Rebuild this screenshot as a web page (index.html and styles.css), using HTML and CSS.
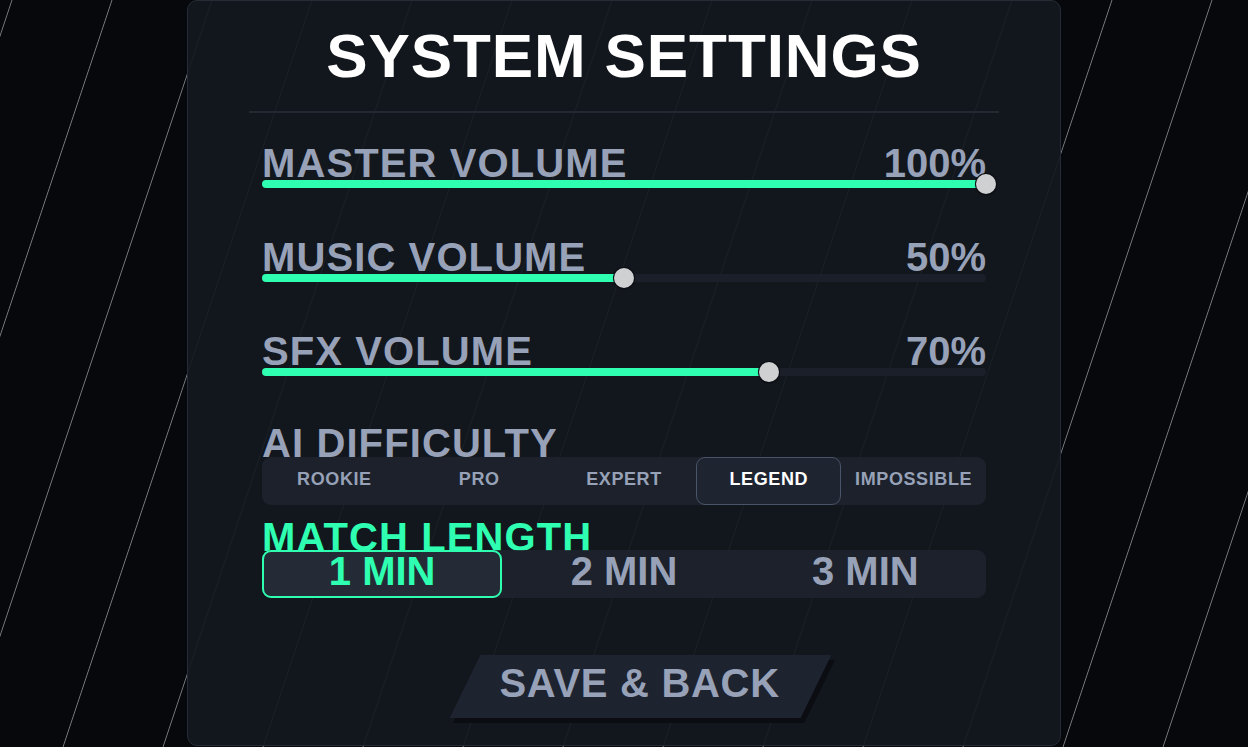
FILE: index.html
```html
<!DOCTYPE html>
<html lang="en">
<head>
<meta charset="utf-8">
<title>System Settings</title>
<link rel="stylesheet" href="styles.css">
</head>
<body>
<div class="screen">
  <div class="panel">
    <header class="panel-head">
      <h1 class="title">SYSTEM SETTINGS</h1>
    </header>
    <div class="panel-body">
      <div class="slider-row">
        <div class="row-head"><span class="label">MASTER VOLUME</span><span class="label value">100%</span></div>
        <div class="track"><div class="fill" style="width:100%"><span class="thumb"></span></div></div>
      </div>
      <div class="slider-row">
        <div class="row-head"><span class="label">MUSIC VOLUME</span><span class="label value">50%</span></div>
        <div class="track"><div class="fill" style="width:50%"><span class="thumb"></span></div></div>
      </div>
      <div class="slider-row">
        <div class="row-head"><span class="label">SFX VOLUME</span><span class="label value">70%</span></div>
        <div class="track"><div class="fill" style="width:70%"><span class="thumb"></span></div></div>
      </div>

      <div class="section section-ai">
        <div class="label section-label">AI DIFFICULTY</div>
        <div class="segmented seg-5">
          <div class="seg">ROOKIE</div>
          <div class="seg">PRO</div>
          <div class="seg">EXPERT</div>
          <div class="seg is-active">LEGEND</div>
          <div class="seg">IMPOSSIBLE</div>
        </div>
      </div>

      <div class="section section-match">
        <div class="label section-label label-accent">MATCH LENGTH</div>
        <div class="segmented seg-3">
          <div class="seg is-active">1 MIN</div>
          <div class="seg">2 MIN</div>
          <div class="seg">3 MIN</div>
        </div>
      </div>

      <div class="actions">
        <div class="save-btn"><span class="save-text">SAVE &amp; BACK</span></div>
      </div>
    </div>
  </div>
</div>
</body>
</html>
```
FILE: styles.css
```css
* { box-sizing: border-box; }

html, body {
  margin: 0;
  padding: 0;
  background: #07080c;
}

body {
  font-family: "Liberation Sans", Arial, sans-serif;
  overflow: hidden;
}

.screen {
  width: 1248px;
  height: 747px;
  display: flex;
  justify-content: center;
  align-items: flex-start;
  background-color: #07080c;
  background-image: repeating-linear-gradient(
    108.4349deg,
    rgba(255,255,255,0) 0px,
    rgba(255,255,255,0) 10.5px,
    rgba(210,212,216,0.55) 11.38px,
    rgba(255,255,255,0) 12.3px,
    rgba(255,255,255,0) 94.868px
  );
}

.panel {
  width: 874px;
  height: 746px;
  border: 1px solid #262b36;
  border-radius: 10px;
  background: rgba(19, 24, 32, 0.92);
  display: flex;
  flex-direction: column;
}

.panel-head {
  margin: 0 61px 0 61px;
  padding: 23px 0 23px;
  border-bottom: 2px solid #232832;
}

.title {
  margin: 0;
  text-align: center;
  font-size: 62px;
  line-height: 64px;
  font-weight: 700;
  letter-spacing: 0.9px;
  color: #ffffff;
}

.panel-body {
  padding: 30px 74px 0;
  display: flex;
  flex-direction: column;
}

.label {
  font-size: 40px;
  font-weight: 700;
  letter-spacing: 1.1px;
  color: #97a1b7;
  line-height: 40px;
  white-space: nowrap;
}

.value { letter-spacing: 0; }

.label-accent { color: #2effb0; }

.slider-row + .slider-row { margin-top: 49px; }

.row-head {
  display: flex;
  justify-content: space-between;
  height: 40px;
}

.track {
  position: relative;
  margin-top: -3px;
  height: 8px;
  border-radius: 4px;
  background: #1b1f29;
}

.fill {
  position: relative;
  height: 100%;
  border-radius: 4px;
  background: #2effb0;
}

.thumb {
  position: absolute;
  right: -10px;
  top: -6px;
  width: 20px;
  height: 20px;
  border-radius: 50%;
  background: #cfd0d2;
  box-shadow: 0 0 0 1px #0b0d12, 0 1px 2px rgba(0,0,0,0.6);
}

.section-ai { margin-top: 47px; }
.section-match { margin-top: 12px; }

.section-label { height: 40px; }

.segmented {
  position: relative;
  display: grid;
  grid-template-rows: 48px;
  height: 48px;
  border-radius: 9px;
  background: rgba(30, 35, 46, 0.85);
}

.seg-5 {
  grid-template-columns: repeat(5, 1fr);
  margin-top: -6px;
}

.seg-3 {
  grid-template-columns: repeat(3, 1fr);
  margin-top: -7px;
}

.seg {
  display: flex;
  align-items: center;
  justify-content: center;
  height: 48px;
  font-weight: 700;
  line-height: 1;
  color: #97a1b7;
  white-space: nowrap;
  border-radius: 9px;
}

.seg-5 .seg {
  font-size: 18px;
  letter-spacing: 0.6px;
  padding-bottom: 4px;
}

.seg-5 .seg.is-active {
  color: #ffffff;
  background: #1e2430;
  border: 1px solid #4a5468;
}

.seg-3 .seg {
  font-size: 40px;
  letter-spacing: 0;
  padding-bottom: 6px;
}

.seg-3 .seg.is-active {
  color: #2effb0;
  background: #242b36;
  border: 2px solid #2effb0;
  margin-right: 1px;
}

.actions {
  margin-top: 57px;
  display: flex;
  justify-content: center;
}

.save-btn {
  margin-left: 32px;
  width: 351px;
  height: 63px;
  background: #1e2330;
  transform: skewX(-26deg);
  box-shadow: 6px 5px 0 #0b0d12;
  display: flex;
  align-items: center;
  justify-content: center;
  padding-bottom: 7px;
}

.save-text {
  display: block;
  transform: skewX(26deg);
  font-size: 40px;
  font-weight: 700;
  letter-spacing: 0.7px;
  margin-right: 4px;
  color: #97a1b7;
  white-space: nowrap;
}
```
